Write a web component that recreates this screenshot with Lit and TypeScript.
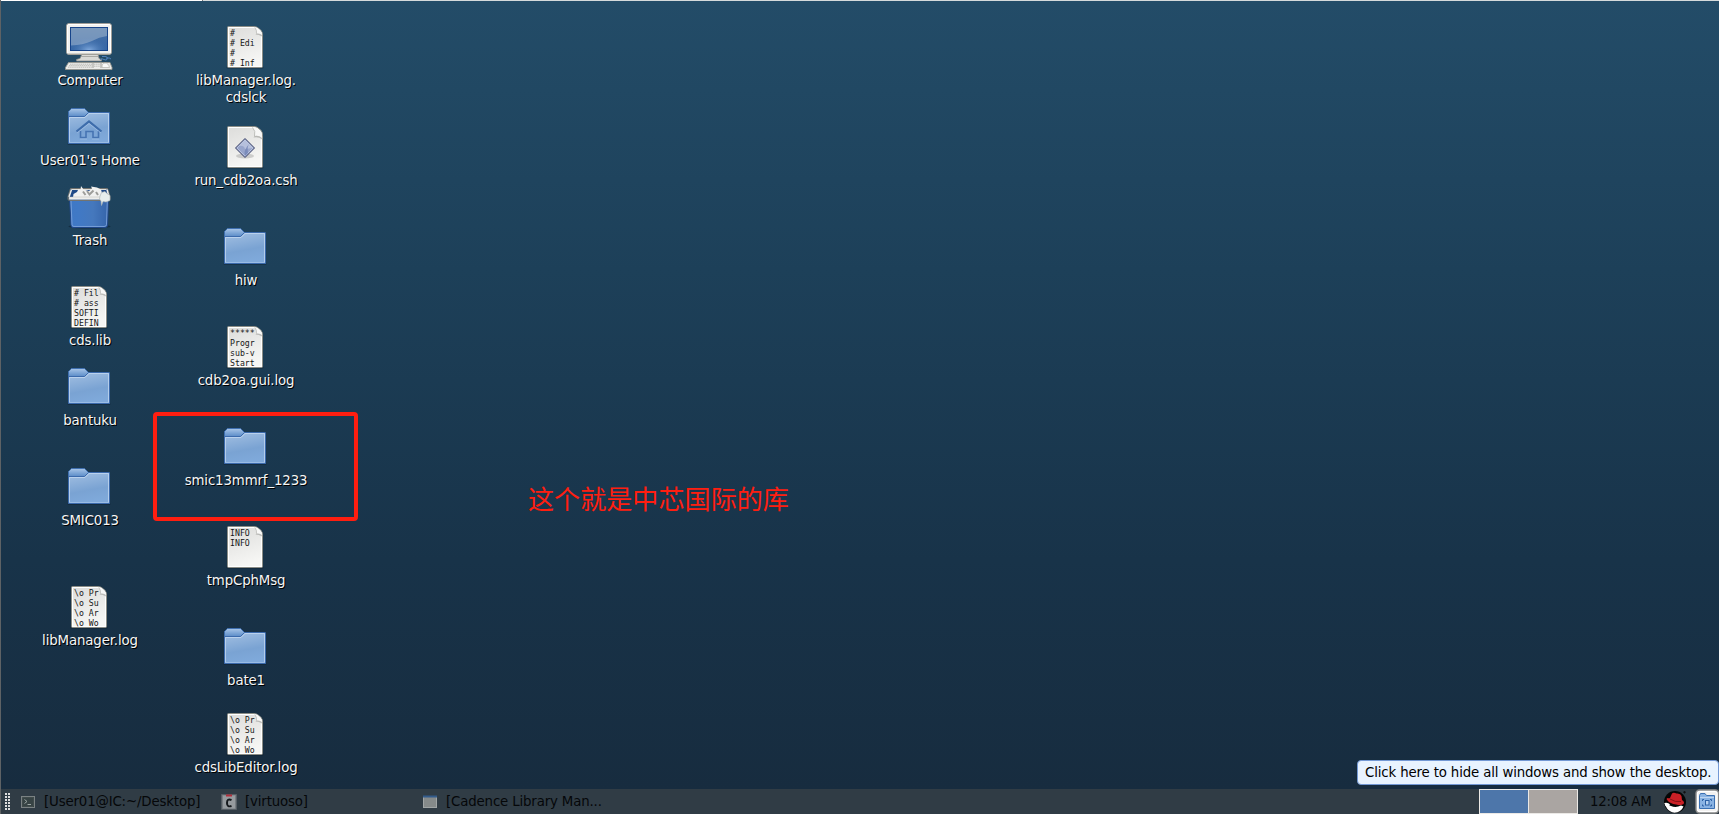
import { LitElement, html, svg, css } from "lit";
import { customElement, property } from "lit/decorators.js";

type Kind = "computer" | "home" | "trash" | "folder" | "text" | "script";

interface Entry {
  x: number;
  y: number;
  kind: Kind;
  label: string[];
  preview?: string[];
}

const LOG = ["\\o Pr", "\\o Su", "\\o Ar", "\\o Wo"];

const ENTRIES: Entry[] = [
  { x: 65, y: 23, kind: "computer", label: ["Computer"] },
  { x: 65, y: 103, kind: "home", label: ["User01's Home"] },
  { x: 65, y: 183, kind: "trash", label: ["Trash"] },
  { x: 65, y: 283, kind: "text", label: ["cds.lib"], preview: ["# Fil", "# ass", "SOFTI", "DEFIN"] },
  { x: 65, y: 363, kind: "folder", label: ["bantuku"] },
  { x: 65, y: 463, kind: "folder", label: ["SMIC013"] },
  { x: 65, y: 583, kind: "text", label: ["libManager.log"], preview: LOG },
  { x: 221, y: 23, kind: "text", label: ["libManager.log.", "cdslck"], preview: ["#", "# Edi", "#", "# Inf"] },
  { x: 221, y: 123, kind: "script", label: ["run_cdb2oa.csh"] },
  { x: 221, y: 223, kind: "folder", label: ["hiw"] },
  { x: 221, y: 323, kind: "text", label: ["cdb2oa.gui.log"], preview: ["*****", "Progr", "sub-v", "Start"] },
  { x: 221, y: 423, kind: "folder", label: ["smic13mmrf_1233"] },
  { x: 221, y: 523, kind: "text", label: ["tmpCphMsg"], preview: ["INFO", "INFO"] },
  { x: 221, y: 623, kind: "folder", label: ["bate1"] },
  { x: 221, y: 710, kind: "text", label: ["cdsLibEditor.log"], preview: LOG },
];

const folderArt = svg`
  <defs>
    <linearGradient id="fb" x1="0" y1="0" x2="0.25" y2="1">
      <stop offset="0" stop-color="#a3c0e2"/><stop offset="0.65" stop-color="#7aa3d3"/><stop offset="1" stop-color="#7fa9da"/>
    </linearGradient>
    <linearGradient id="ft" x1="0" y1="0" x2="0" y2="1">
      <stop offset="0" stop-color="#a9c6e8"/><stop offset="1" stop-color="#5b8cc8"/>
    </linearGradient>
  </defs>
  <rect x="2.5" y="40" width="43" height="2" rx="1" fill="#0b1a28" opacity="0.35"/>
  <path d="M3.5 13.5V8.5L6.5 5.5H19.5L23.5 9.5V13.5Z" fill="url(#ft)" stroke="#3f6fb0"/>
  <path d="M3.5 14Q3.500 13.500 4 13.500H19.500L23.500 9.500H44Q44.500 9.500 44.500 10V40.500H3.500Z" fill="url(#fb)" stroke="#3b6aac"/>
  <path d="M4.500 39.500V14.500H20L24 10.500H43.500V39.500" fill="none" stroke="#c5daf1" stroke-opacity="0.75"/>
  <path d="M4.500 39.500H43.500" stroke="#a5c5ea" stroke-opacity="0.7"/>
`;

const homeArt = svg`
  ${folderArt}
  <path d="M11.500 28.500L24 18.500L36.500 28.500" fill="none" stroke="#3d6cab" stroke-width="2.200"/>
  <path d="M15.500 28V34.500H21V28.500H28V34.500H33.500V28" fill="none" stroke="#4674b2" stroke-width="1.600"/>
  <path d="M12 30L24 20.500L36 30M15 36H22M27 36H34" fill="none" stroke="#b4cdec" stroke-width="0.700" opacity="0.7"/>
`;

const pageArt = svg`
  <defs>
    <linearGradient id="pg" x1="0" y1="0" x2="0.3" y2="1">
      <stop offset="0" stop-color="#dcdcda"/><stop offset="1" stop-color="#f6f6f4"/>
    </linearGradient>
  </defs>
  <rect x="5.500" y="43.500" width="37" height="2" rx="1" fill="#07121c" opacity="0.4"/>
  <path d="M6.500 4.500Q6.500 3.500 7.500 3.500H33Q36 3.500 38.500 6L40 7.500Q41.500 9 41.500 12V43.500Q41.500 44.500 40.500 44.500H7.500Q6.500 44.500 6.500 43.500Z" fill="url(#pg)" stroke="#8b8d86"/>
  <path d="M7.500 43.500V4.500H33Q36 5 38 7Q40.500 9.500 40.500 12V43.500Z" fill="none" stroke="#fff"/>
`;

const curl = svg`
  <path d="M33.500 4Q37 4.500 39 7Q41.200 9 41.200 12Q39 10 35.500 10.500Q36 6.500 33.500 4Z" fill="#f8f8f7"/>
  <path d="M33.800 4.500Q36 7 35.500 10.500" fill="none" stroke="#b4b5b0" stroke-width="0.700"/>
  <path d="M35.500 10.500Q39 10 41 12L41 13.500Q38 11.500 34.500 11.500Z" fill="#8f908c" opacity="0.5"/>
`;

const scriptArt = svg`
  ${pageArt}
  <path d="M31 4Q36.500 4.500 39 8Q41.200 10 41.200 15.500Q38.500 12 33.500 13Q35 8 31 4Z" fill="#f7f7f6"/>
  <path d="M31.500 4.500Q35 8 33.500 13" fill="none" stroke="#b4b5b0" stroke-width="0.800"/>
  <path d="M33.500 13Q38 12 41 15V16.500Q38 13.500 32.500 14.500Z" fill="#8f908c" opacity="0.55"/>
  <ellipse cx="24" cy="33" rx="9" ry="2.500" fill="#777" opacity="0.3"/>
  <path d="M24 15.500L33.500 25L24 34.500L14.500 25Z" fill="#98a5cb" stroke="#3d4468"/>
  <path d="M24 17L32 25L24 33L16 25Z" fill="none" stroke="#c0c9e3" stroke-width="0.800"/>
  <path d="M24 17L32 25L24 26Q23 22 18 23Z" fill="#c0c9e2" opacity="0.75"/>
  <path d="M28 21Q26 24 27 30L24 33Q22 28 28 21Z" fill="#7385b5" opacity="0.8"/>
`;

const computerArt = svg`
  <defs>
    <linearGradient id="sc" x1="0" y1="0" x2="0" y2="1">
      <stop offset="0" stop-color="#4a74a6"/><stop offset="0.5" stop-color="#3f6ca6"/><stop offset="1" stop-color="#3465a4"/>
    </linearGradient>
    <radialGradient id="sg" cx="0.5" cy="1" r="0.6">
      <stop offset="0" stop-color="#7fa8dc"/><stop offset="1" stop-color="#3465a4" stop-opacity="0"/>
    </radialGradient>
  </defs>
  <path d="M17 31H33L34 35.500L36.500 36.500V38H11.500V36.500L15 35.500Z" fill="#d9d9d6" stroke="#8c8c87" stroke-width="0.800"/>
  <path d="M16 33.500H33" stroke="#a9a9a5"/>
  <path d="M35 37Q36 34.500 39 36.500Q42 38 42 36Q44 33 37 33.500M46 36Q45 34.500 41 35" fill="none" stroke="#4f80bb" stroke-width="1"/>
  <rect x="1.500" y="0.500" width="45" height="31" rx="2.500" fill="#f1f1ef" stroke="#a09e98"/>
  <rect x="2.500" y="1.500" width="43" height="29" rx="1.500" fill="none" stroke="#fff"/>
  <path d="M3 30.500H45" stroke="#cfcfcb"/>
  <rect x="5.500" y="4.500" width="37" height="23" fill="url(#sc)" stroke="#17448a"/>
  <rect x="6" y="5" width="36" height="22" fill="url(#sg)"/>
  <path d="M6 5H42V13Q34 14 27 18Q18 22 6 22.500Z" fill="#c5d3de" opacity="0.4"/>
  <path d="M3.500 39.500H45L47 44.500V46.500H0.500V44.500Z" fill="#ecece9" stroke="#96968f" stroke-width="0.900"/>
  <path d="M5 41.200H27M4 42.700H27M3 44.200H27M29 41.200H35M29 43.200H35" stroke="#bcbcb7" stroke-width="1" stroke-dasharray="1.500 0.600"/>
  <path d="M28 39.500V45M36 39.500V45" stroke="#a0a09a"/>
  <path d="M37 44.500Q37 40 40 40Q43.500 40 44.500 44.500Z" fill="#fafaf8" stroke="#b5b5ae" stroke-width="0.700"/>
`;

const trashArt = svg`
  <defs>
    <linearGradient id="tr" x1="0" y1="0" x2="1" y2="0">
      <stop offset="0" stop-color="#3f78c5"/><stop offset="0.200" stop-color="#4079c6"/><stop offset="0.600" stop-color="#4578bd"/><stop offset="1" stop-color="#3564aa"/>
    </linearGradient>
  </defs>
  <ellipse cx="24.500" cy="43.500" rx="21" ry="2" fill="#07121c" opacity="0.4"/>
  <path d="M4.500 15H43.500L42.500 42Q42.500 44.500 40 44.500H8Q6 44.500 6 42Z" fill="url(#tr)" stroke="#1f4688"/>
  <path d="M6 18L7 41.500Q7 43.500 9 43.500H39Q41.500 43.500 41.500 41.500L42.300 18" fill="none" stroke="#7ba2da" stroke-width="0.900"/>
  <path d="M6 6H42L44.500 15.500H3.500Z" fill="#204a87"/>
  <path d="M5.500 5.500H42.500L45 13.500V16Q45 17.500 43.500 17.500H4.500Q3 17.500 3 16V13.500Z" fill="none" stroke="#73736f" stroke-width="1"/>
  <path d="M6.500 6.500H41.500" stroke="#dededb" stroke-width="1.200"/>
  <path d="M6.500 6.500L4 14M42 6.500L44 14" stroke="#ededeb" stroke-width="1.500"/>
  <path d="M8 14.500L8.500 11L12 9L13.500 6L15.500 7L16 3L18.500 6.500L24 8L27 5.500L26 3.500L32 4.500L36 6.500L37 10L35 14.500Z" fill="#f1f1f0"/>
  <path d="M18 8.500L20.500 12M22 8L24.500 11.500L28.500 7.500M31 9L33 12" fill="none" stroke="#9d9d9a" stroke-width="2"/>
  <path d="M4 14H37L40 16.500H4Z" fill="#eeeeec" stroke="#bbbbb7" stroke-width="0.500"/>
  <path d="M35 13L36.500 9.500L40 8.500L42 10.500L45 12.500V17.500L41 19L38 18.500L36.500 22.500L36 18L34.500 16Z" fill="#e6edec" stroke="#a7b0b1" stroke-width="0.600"/>
`;

@customElement("desktop-entry")
class DesktopEntry extends LitElement {
  @property({ attribute: false }) entry!: Entry;

  static styles = css`
    :host { display: flex; flex-direction: column; align-items: center; width: 160px; }
    .art { display: block; width: 48px; height: 48px; overflow: visible; }
    .mono { font-family: "DejaVu Sans Mono", monospace; font-size: 8.6px; fill: #161616; white-space: pre; }
    .label {
      margin-top: 1px; padding-left: 2px; text-align: center;
      font: 13.333px/17px "DejaVu Sans", sans-serif; letter-spacing: -0.13px; color: #f6f6f6;
      text-shadow: 1px 1px 0 #000; white-space: nowrap;
    }
  `;

  private art() {
    const e = this.entry;
    switch (e.kind) {
      case "computer": return computerArt;
      case "home": return homeArt;
      case "trash": return trashArt;
      case "folder": return folderArt;
      case "script": return scriptArt;
      default:
        return svg`${pageArt}${(e.preview ?? []).map((t, i) =>
          svg`<text class="mono" x="9" y=${13 + i * 10} textLength=${t.length * 4.95} lengthAdjust="spacingAndGlyphs">${t}</text>`)}${curl}`;
    }
  }

  render() {
    return html`
      <svg class="art" viewBox="0 0 48 48">${this.art()}</svg>
      <div class="label">${this.entry.label.map((l) => html`<div>${l}</div>`)}</div>
    `;
  }
}

@customElement("bottom-panel")
class BottomPanel extends LitElement {
  static styles = css`
    :host {
      display: flex; align-items: center; height: 25px; box-sizing: border-box;
      background: #303c45; color: #050709;
      font: 13.333px/17px "DejaVu Sans", sans-serif; letter-spacing: -0.15px; white-space: nowrap;
    }
    svg { display: block; flex: none; }
    .grip { width: 6px; margin-left: 4px; }
    .task { display: flex; align-items: center; gap: 8px; }
    .terminal { margin-left: 10px; width: 200px; }
    .virtuoso { width: 202px; }
    .spacer { flex: 1; }
    .switcher { display: flex; gap: 1px; width: 97px; height: 23px; padding: 1px; background: #ebe9e6; align-self: flex-start; }
    .space { flex: 1; background: #aaa5a2; }
    .active { background: #4d76aa; }
    .clock { width: 61px; margin-left: 12px; letter-spacing: -0.22px; }
    .hat { margin-left: 12px; }
    .show { margin-left: 8px; }
  `;

  render() {
    return html`
      <svg class="grip" width="6" height="18" viewBox="0 0 6 18">
        ${[0, 3, 6, 9, 12, 15].map((y) => svg`<path d="M0 ${y + 1}h2M3 ${y + 1}h2" stroke="#dedede" stroke-width="2"/>`)}
      </svg>
      <div class="task terminal">
        <svg width="15" height="14" viewBox="0 0 15 14">
          <rect x="0.500" y="1.500" width="13" height="11" fill="#293333" stroke="#7b8283"/>
          <rect x="1.500" y="2.500" width="11" height="9" fill="#374344" stroke="#4e5757" stroke-width="0.600"/>
          <path d="M3.500 4.500L6 6.500L3.500 8.500M6.500 9.500H10" fill="none" stroke="#9da7a5"/>
        </svg>
        <span>[User01@IC:~/Desktop]</span>
      </div>
      <div class="task virtuoso">
        <svg width="16" height="16" viewBox="0 0 16 16">
          <path d="M0.500 0.500H4M12 0.500H15.500V15.500H0.500V0.500" fill="#777d82" stroke="#565e65"/>
          <rect x="2" y="1.500" width="12" height="13" fill="#969b9f"/>
          <path d="M5 1.500H11" stroke="#b02f3c" stroke-width="2"/>
          <path d="M10.500 6Q6 4 6 9Q6 13.500 10.500 12" fill="none" stroke="#15191d" stroke-width="2"/>
        </svg>
        <span>[virtuoso]</span>
      </div>
      <div class="task">
        <svg width="15" height="14" viewBox="0 0 15 14">
          <rect x="0.500" y="1.500" width="13" height="11" fill="#858a8a" stroke="#a0a5a5"/>
          <path d="M0 1.500H14" stroke="#325b8b" stroke-width="2"/>
        </svg>
        <span>[Cadence Library Man...</span>
      </div>
      <div class="spacer"></div>
      <div class="switcher"><div class="space active"></div><div class="space"></div></div>
      <div class="clock">12:08 AM</div>
      <svg class="hat" width="24" height="24" viewBox="0 0 24 24">
        <circle cx="12" cy="12" r="11" fill="#050505"/>
        <path d="M20 2.500l1.500-1 1.500 1M21.500 1.500v2" stroke="#111" fill="none"/>
        <path d="M2 14.500Q5 14 8 16Q13 18 18 15.500L20.500 16.500Q18 22.500 11.500 22.800Q6.500 22 4 18.500Z" fill="#fff"/>
        <path d="M1.300 13Q5 12 7 14.500L4.500 17.500Q2 16.500 1.300 13Z" fill="#fff"/>
        <path d="M4 8Q6 8.500 7 8L9 3.500Q10.500 2 13.500 3.500Q17.500 3 18.500 6L19 10Q22 12 20.500 14Q18 16 13 14.500Q7 13.500 4.500 10.500Q3 9 4 8Z" fill="#cb2026"/>
        <path d="M7 9Q12 12.500 18 11.500" fill="none" stroke="#7e1014" stroke-width="0.900"/>
      </svg>
      <svg class="show" width="24" height="25" viewBox="0 0 24 25">
        <rect x="1" y="1" width="22.500" height="23" rx="3.500" fill="#f2f1f0" stroke="#8b8c8c" stroke-width="1.400"/>
        <rect x="2.500" y="2.500" width="19.500" height="20" rx="2" fill="none" stroke="#fff"/>
        <path d="M4.500 6.500L5.500 4.500H10L11.500 6.500H19.500V19.500H4.500Z" fill="#8ab3e3" stroke="#3b70b2"/>
        <path d="M5 8.500H19" stroke="#bdd5f1"/>
        <path d="M7.500 12V10.500H9M15 10.500H16.500V12M16.500 15.500V17H15M9 17H7.500V15.500" fill="none" stroke="#2d61a5"/>
        <rect x="10.500" y="11.500" width="3.500" height="4.500" fill="#b6d1ef" stroke="#2d61a5"/>
      </svg>
    `;
  }
}

@customElement("app-root")
class AppRoot extends LitElement {
  static styles = css`
    :host {
      display: flex; flex-direction: column; position: relative; box-sizing: border-box;
      width: 1719px; height: 814px; overflow: hidden;
      border-left: 1px solid #5e6265;
      background: linear-gradient(#234c68 0, #1d4059 270px, #183349 560px, #172c3f 789px);
    }
    .edge { display: flex; height: 1px; background: #d5dadb; }
    .edge-light { width: 201px; background: #fff; border-right: 1px solid #777; }
    .canvas { flex: 1; }
    desktop-entry { position: absolute; }
    .frame {
      position: absolute; left: 152px; top: 412px; width: 205px; height: 109px;
      box-sizing: border-box; border: 4px solid #ff1e10; border-radius: 4px;
    }
    .note {
      position: absolute; left: 527px; top: 479px; color: #ff1e10;
      font: 400 26.1px/38px "Noto Sans CJK SC", sans-serif; white-space: nowrap;
    }
    .tip {
      position: absolute; left: 1356px; top: 760px; width: 362px; height: 25px;
      box-sizing: border-box; padding: 3px 0 0 7px; border: 1px solid #7398d4; border-radius: 4px;
      background: #e8f3ff; color: #000; white-space: nowrap;
      font: 13.333px/17px "DejaVu Sans", sans-serif; letter-spacing: -0.145px;
    }
  `;

  render() {
    return html`
      <div class="edge"><div class="edge-light"></div></div>
      <div class="canvas">
        ${ENTRIES.map((e) => html`<desktop-entry .entry=${e} style="left:${e.x - 57}px;top:${e.y}px"></desktop-entry>`)}
        <div class="frame"></div>
        <div class="note">这个就是中芯国际的库</div>
      </div>
      <bottom-panel></bottom-panel>
      <div class="tip">Click here to hide all windows and show the desktop.</div>
    `;
  }
}
